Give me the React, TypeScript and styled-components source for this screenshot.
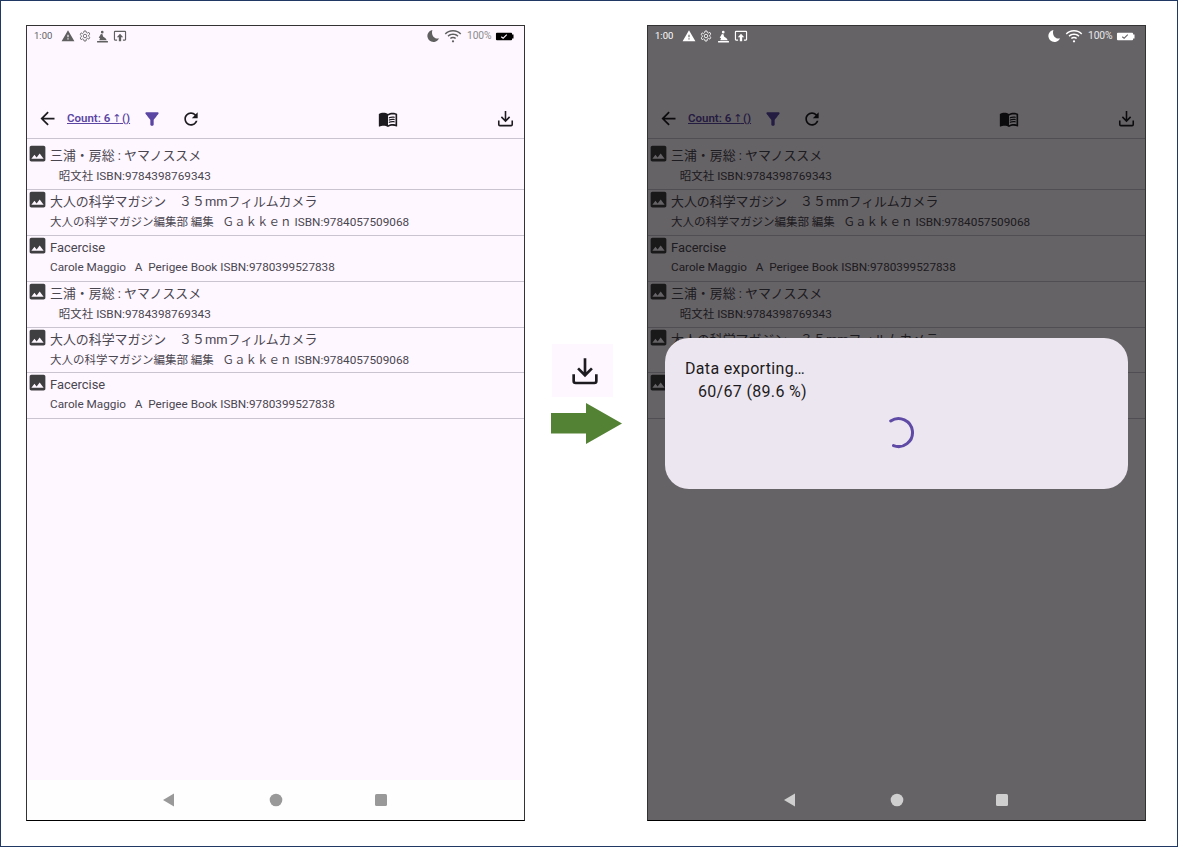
import React from "react";
import styled, { createGlobalStyle } from "styled-components";

const Global = createGlobalStyle`
  html, body { margin: 0; padding: 0; background: #fff; }
  * { box-sizing: border-box; }
  body { font-family: Roboto, "Noto Sans CJK JP", sans-serif; }
`;

const Page = styled.div`
  width: 1178px;
  height: 847px;
  border: 1px solid #1f3864;
  padding: 24px 0 0 25px;
  display: flex;
  align-items: flex-start;
  background: #fff;
  overflow: hidden;
`;

const Phone = styled.div`
  position: relative;
  width: 499px;
  height: 796px;
  border: 1px solid #333;
  border-bottom-color: #000;
  background: #fef7ff;
  display: flex;
  flex-direction: column;
`;

const StatusBar = styled.div<{ $dim?: boolean }>`
  position: relative;
  z-index: 2;
  height: 20px;
  padding: 0 10px 0 7px;
  display: flex;
  align-items: center;
  gap: 4.5px;
  color: ${(p) => (p.$dim ? "#fff" : "#606060")};
  font-size: 9.5px;
  line-height: 1;
`;

const Clock = styled.span`
  width: 21px;
  margin-right: 1px;
`;

const StatusGap = styled.div`
  flex: 1;
`;

const Battery = styled.span<{ $dim?: boolean }>`
  font-size: 10.3px;
  letter-spacing: -0.1px;
  margin-right: -1px;
  color: ${(p) => (p.$dim ? "#e8e8e8" : "#8c8c8c")};
`;

const Cell = styled.svg<{ $dim?: boolean }>`
  width: 19px;
  height: 19px;
  flex: none;
  fill: ${(p) => (p.$dim ? "#fff" : "#000")};
`;

const Toolbar = styled.div`
  margin-top: 53px;
  height: 40px;
  padding: 0 9px 0 10px;
  display: flex;
  align-items: center;
  border-bottom: 1px solid #cac4d0;
  color: #1d1b20;
`;

const CountLink = styled.a`
  margin: 0 12px 2px 9px;
  color: #5b46a3;
  font-size: 11.5px;
  font-weight: 600;
  text-decoration: underline;
  white-space: pre;
`;

const UpMark = styled.span`
  font-family: "DejaVu Sans", sans-serif;
  font-size: 11px;
  font-weight: 400;
  letter-spacing: -2.4px;
  margin-left: -0.8px;
`;

const ToolGap = styled.div<{ $w?: number }>`
  ${(p) => (p.$w ? `width: ${p.$w}px; flex: none;` : "flex: 1;")}
`;

const Funnel = styled.svg`
  width: 20px;
  height: 20px;
  flex: none;
  fill: #5b46a3;
`;

const List = styled.div`
  flex: 1;
  padding-top: 5.4px;
`;

const Row = styled.div`
  height: 45.8px;
  border-bottom: 1px solid #cac4d0;
  display: flex;
  align-items: flex-start;
  gap: 2px;
`;

const Thumb = styled.svg`
  width: 21px;
  height: 21px;
  margin-top: -1px;
  fill: #3f3f42;
  flex: none;
`;

const RowText = styled.div`
  padding-top: 4px;
  display: flex;
  flex-direction: column;
  gap: 5px;
  color: #4a4650;
  white-space: pre;
`;

const Title = styled.div`
  font-size: 12.92px;
  line-height: 16px;
`;

const Sub = styled.div<{ $latin?: boolean }>`
  font-size: 11.75px;
  line-height: 14px;
  margin-top: ${(p) => (p.$latin ? "-1px" : "0")};
`;

const Cjk = styled.span`
  font-size: 11.5px;
`;

const NavBar = styled.div<{ $dim?: boolean }>`
  position: relative;
  z-index: 2;
  height: 40px;
  background: ${(p) => (p.$dim ? "transparent" : "#fefefe")};
  padding-left: 134px;
  display: flex;
  align-items: center;
  color: ${(p) => (p.$dim ? "#cfcfcf" : "#999")};
`;

const NavSlot = styled.svg`
  width: 16px;
  height: 16px;
  fill: currentColor;
  flex: none;
`;

const Scrim = styled.div`
  position: absolute;
  inset: 0;
  z-index: 1;
  background: rgba(0, 0, 0, 0.6);
`;

const Dialog = styled.div`
  position: absolute;
  z-index: 3;
  left: 17px;
  top: 312px;
  width: 463px;
  height: 151px;
  border-radius: 24px;
  background: #ece6f0;
  padding: 19px 20px;
  color: #1d1b20;
  font-family: Roboto, sans-serif;
  font-size: 16px;
  letter-spacing: 0.33px;
  line-height: 23px;
  white-space: pre;
`;

const Spinner = styled.svg`
  position: absolute;
  left: 217px;
  top: 78px;
  width: 34px;
  height: 34px;
  fill: none;
  stroke: #5f4ba6;
  stroke-width: 3;
  stroke-linecap: round;
`;

const Middle = styled.div`
  width: 122px;
  padding: 319px 0 0 26px;
  display: flex;
  flex-direction: column;
  gap: 6px;
`;

const IconTile = styled.div`
  width: 61px;
  height: 53px;
  margin-left: 1px;
  padding-left: 4px;
  background: #fef7ff;
  color: #1d1b20;
  display: flex;
  align-items: center;
  justify-content: center;
`;

const ArrowShape = styled.svg`
  width: 71px;
  height: 41px;
  fill: #548235;
`;

const Ico = styled.svg<{ $s?: number }>`
  width: ${(p) => p.$s ?? 20}px;
  height: ${(p) => p.$s ?? 20}px;
  fill: currentColor;
  flex: none;
`;

const Stroke = styled.svg<{ $s?: number; $w?: number }>`
  width: ${(p) => p.$s ?? 22}px;
  height: ${(p) => p.$s ?? 22}px;
  fill: none;
  stroke: currentColor;
  stroke-width: ${(p) => p.$w ?? 2};
  flex: none;
`;

const DownloadIcon = ({ s }: { s: number }) => (
  <Stroke $s={s} viewBox="0 0 24 24">
    <path d="M12 2.500V15M6.800 10 12 15.200 17.200 10" />
    <path d="M3.500 14.500v5a1.500 1.500 0 0 0 1.500 1.500h14a1.500 1.500 0 0 0 1.500-1.500v-5" />
  </Stroke>
);

const NB = "大人の科学マガジン　３５mmフィルムカメラ";
const MT = "三浦・房総 : ヤマノススメ";
const FT = "Facercise";
const MS = <>{"   "}<Cjk>昭文社</Cjk>{" ISBN:9784398769343"}</>;
const NS = <><Cjk>大人の科学マガジン編集部 編集</Cjk>{"   "}<Cjk>Ｇａｋｋｅｎ</Cjk>{" ISBN:9784057509068"}</>;
const FS = "Carole Maggio   A  Perigee Book ISBN:9780399527838";

const books: [string, React.ReactNode, boolean][] = [
  [MT, MS, false],
  [NB, NS, false],
  [FT, FS, true],
  [MT, MS, false],
  [NB, NS, false],
  [FT, FS, true],
];

const Screen = ({ dim }: { dim?: boolean }) => (
  <Phone>
    <StatusBar $dim={dim}>
      <Clock>1:00</Clock>
      <Ico $s={14} viewBox="0 0 24 24"><path d="M1 21h22L12 2 1 21zm12-3h-2v-2h2v2zm0-4h-2v-4h2v4z" /></Ico>
      <Stroke $s={12} $w={1.7} viewBox="0 0 24 24"><path d="M12 15.500a3.500 3.500 0 1 0 0-7 3.500 3.500 0 0 0 0 7z" /><path d="M10 2h4l.6 3 2.400 1.200 2.700-1.500 2 3.400-2.300 2 .1 2.800 2.200 2-2 3.400-2.700-1.500-2.400 1.300L14 22h-4l-.6-3-2.400-1.200-2.700 1.500-2-3.400 2.300-2-.1-2.800-2.200-2 2-3.400 2.700 1.500L9.400 5z" /></Stroke>
      <Ico $s={13} viewBox="0 0 24 24"><path d="M2 20.500h20V23H2zM11.500 1.500a2.500 2.500 0 1 1 0 5 2.500 2.500 0 0 1 0-5zM9 7.500l3 .5 1 4 4.500 3 2.500 4H6l1.500-4L5 14l2-3z" /></Ico>
      <Stroke $s={14} viewBox="0 0 24 24">
        <path d="M7 19H3.500a1 1 0 0 1-1-1V5a1 1 0 0 1 1-1h17a1 1 0 0 1 1 1v13a1 1 0 0 1-1 1H17" />
        <path d="M12 8l5.500 6H14v7h-4v-7H6.500z" fill="currentColor" stroke="none" />
      </Stroke>
      <StatusGap />
      <Ico $s={14} viewBox="0 0 24 24"><path d="M11 1.500a10.500 10.500 0 1 0 11.500 14.500C15 18 8 11 11 1.500z" /></Ico>
      <Ico $s={18} viewBox="0 0 24 24"><path d="M12 4C7.300 4 3.600 5.800 1 8.500l1.400 1.400C4.700 7.500 8 6 12 6s7.300 1.500 9.600 3.900L23 8.500C20.400 5.800 16.700 4 12 4zm0 4.500c-3 0-5.500 1.100-7.300 3l1.400 1.400C7.500 11.400 9.600 10.500 12 10.500s4.500.9 5.900 2.400l1.400-1.400c-1.800-1.900-4.300-3-7.300-3zm0 4.500c-1.700 0-3.100.6-4.200 1.700l1.400 1.400c.7-.7 1.700-1.100 2.800-1.100s2.100.4 2.800 1.100l1.400-1.400C15.100 13.600 13.700 13 12 13zm0 4.500a1.500 1.500 0 1 0 0 3 1.500 1.500 0 0 0 0-3z" /></Ico>
      <Battery $dim={dim}>100%</Battery>
      <Cell $dim={dim} viewBox="0 0 20 10"><path fillRule="evenodd" d="M2 1h15a1 1 0 0 1 1 1v1h1.500v4H18v1a1 1 0 0 1-1 1H2a1 1 0 0 1-1-1V2a1 1 0 0 1 1-1zm5 3.800L6.200 5.800 8.600 7.600 12.800 3.400 12 2.600 8.500 6z" /></Cell>
    </StatusBar>
    <Toolbar>
      <Ico $s={21} viewBox="0 0 24 24"><path d="M20 11H7.830l5.590-5.590L12 4l-8 8 8 8 1.410-1.410L7.830 13H20v-2z" /></Ico>
      <CountLink>Count: 6 <UpMark>↑</UpMark> ()</CountLink>
      <Funnel viewBox="0 0 24 24"><path d="M4.250 5.610C6.270 8.200 10 13 10 13v6c0 .55.45 1 1 1h2c.55 0 1-.45 1-1v-6s3.720-4.800 5.740-7.390c.51-.66.04-1.610-.79-1.610H5.040c-.83 0-1.300.95-.79 1.610z" /></Funnel>
      <ToolGap $w={19} />
      <Ico $s={20} viewBox="0 0 24 24"><path d="M17.650 6.350C16.200 4.900 14.210 4 12 4c-4.420 0-7.990 3.580-7.990 8s3.570 8 7.990 8c3.730 0 6.840-2.550 7.730-6h-2.080c-.82 2.330-3.040 4-5.650 4-3.310 0-6-2.690-6-6s2.690-6 6-6c1.660 0 3.140.69 4.220 1.780L13 11h7V4l-2.350 2.350z" /></Ico>
      <ToolGap />
      <Ico $s={20} viewBox="0 0 24 24"><path d="M21 5c-1.110-.35-2.330-.5-3.500-.5-1.950 0-4.050.4-5.500 1.500-1.450-1.100-3.550-1.500-5.500-1.500S2.450 4.900 1 6v14.650c0 .25.25.5.5.5.1 0 .15-.05.25-.05C3.100 20.450 5.050 20 6.500 20c1.950 0 4.050.4 5.500 1.500 1.350-.85 3.800-1.500 5.500-1.500 1.650 0 3.350.3 4.750 1.050.1.05.15.05.25.05.25 0 .5-.25.5-.5V6c-.6-.45-1.250-.75-2-1zm0 13.500c-1.100-.35-2.300-.5-3.500-.5-1.700 0-4.150.65-5.500 1.500V8c1.350-.85 3.800-1.500 5.500-1.500 1.200 0 2.400.15 3.500.5v11.500z" /><path d="M17.500 10.500c.88 0 1.730.09 2.500.26V9.240c-.79-.15-1.640-.24-2.500-.24-1.700 0-3.240.29-4.500.83v1.660c1.130-.64 2.700-.99 4.500-.99zM13 12.490v1.660c1.130-.64 2.700-.99 4.500-.99.880 0 1.730.09 2.500.26V11.900c-.79-.15-1.640-.24-2.500-.24-1.700 0-3.240.3-4.500.83zM17.500 14.330c-1.700 0-3.240.29-4.500.83v1.660c1.130-.64 2.700-.99 4.500-.99.880 0 1.730.09 2.500.26v-1.520c-.79-.16-1.640-.24-2.500-.24z" /></Ico>
      <ToolGap $w={98} />
      <DownloadIcon s={19} />
    </Toolbar>
    <List>
      {books.map(([title, sub, latin], i) => (
        <Row key={i}>
          <Thumb viewBox="0 0 24 24"><path d="M21 19V5c0-1.100-.9-2-2-2H5c-1.100 0-2 .9-2 2v14c0 1.100.9 2 2 2h14c1.100 0 2-.9 2-2zM8.500 13.500l2.500 3.010L14.500 12l4.500 6H5l3.500-4.500z" /></Thumb>
          <RowText>
            <Title>{title}</Title>
            <Sub $latin={latin}>{sub}</Sub>
          </RowText>
        </Row>
      ))}
    </List>
    <NavBar $dim={dim}>
      <NavSlot viewBox="0 0 16 16"><path d="M2 8l11-6.500v13z" /></NavSlot>
      <ToolGap $w={91} />
      <NavSlot viewBox="0 0 16 16"><circle cx="8" cy="8" r="6.300" /></NavSlot>
      <ToolGap $w={89} />
      <NavSlot viewBox="0 0 16 16"><rect x="2" y="2" width="12" height="12" rx="1.500" /></NavSlot>
    </NavBar>
    {dim && (
      <>
        <Scrim />
        <Dialog>
          {"Data exporting…\n   60/67 (89.6 %)"}
          <Spinner viewBox="0 0 34 34"><path d="M8.700 4.900A14 14 0 1 1 11.500 29.600" /></Spinner>
        </Dialog>
      </>
    )}
  </Phone>
);

export default function App() {
  return (
    <Page>
      <Global />
      <Screen />
      <Middle>
        <IconTile><DownloadIcon s={32} /></IconTile>
        <ArrowShape viewBox="0 0 71 41"><path d="M0 10h35V0l36 20.500L35 41V30.500H0z" /></ArrowShape>
      </Middle>
      <Screen dim />
    </Page>
  );
}
